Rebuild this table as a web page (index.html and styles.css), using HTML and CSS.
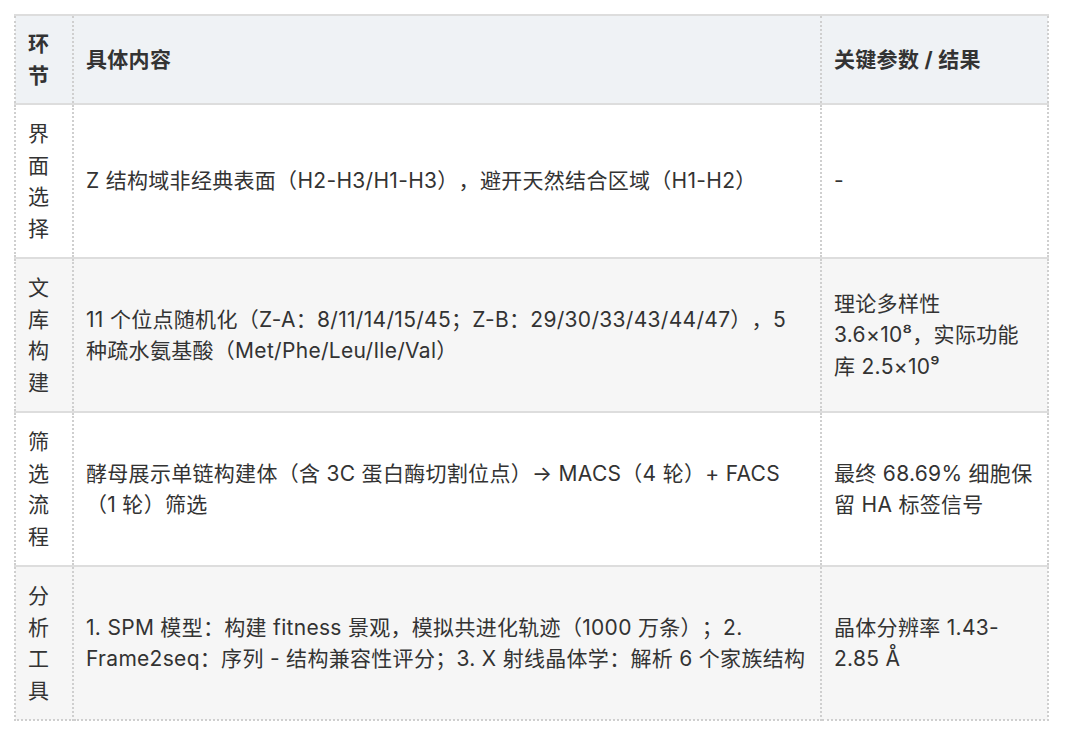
FILE: index.html
```html
<!DOCTYPE html>
<html lang="zh-CN">
<head>
<meta charset="utf-8">
<title>表格</title>
<link rel="stylesheet" href="styles.css">
</head>
<body>
<table class="data">
  <colgroup>
    <col class="c1">
    <col class="c2">
    <col class="c3">
  </colgroup>
  <thead>
    <tr>
      <th>环节</th>
      <th>具体内容</th>
      <th>关键参数 / 结果</th>
    </tr>
  </thead>
  <tbody>
    <tr>
      <td>界面选择</td>
      <td>Z 结构域非经典表面（H2-H3/H1-H3），避开天然结合区域（H1-H2）</td>
      <td>-</td>
    </tr>
    <tr>
      <td>文库构建</td>
      <td>11 个位点随机化（Z-A：8/11/14/15/45；Z-B：29/30/33/43/44/47），5 种疏水氨基酸（Met/Phe/Leu/Ile/Val）</td>
      <td>理论多样性 3.6×10⁸，实际功能库 2.5×10⁹</td>
    </tr>
    <tr>
      <td>筛选流程</td>
      <td>酵母展示单链构建体（含 3C 蛋白酶切割位点）→ MACS（4 轮）+ FACS（1 轮）筛选</td>
      <td>最终 68.69% 细胞保留 HA 标签信号</td>
    </tr>
    <tr>
      <td>分析工具</td>
      <td>1. SPM 模型：构建 fitness 景观，模拟共进化轨迹（1000 万条）；2. Frame2seq：序列 - 结构兼容性评分；3. X 射线晶体学：解析 6 个家族结构</td>
      <td>晶体分辨率 1.43-2.85 Å</td>
    </tr>
  </tbody>
</table>
</body>
</html>
```

FILE: styles.css
```css
html, body {
  margin: 0;
  padding: 0;
  background: #ffffff;
}

body {
  padding: 14px 0 0 14px;
  font-family: "Inter", "Noto Sans CJK SC", sans-serif;
  font-size: 21px;
  line-height: 31.5px;
  color: #333333;
  letter-spacing: 0.3px;
  text-spacing-trim: space-all;
}

.data {
  border-collapse: collapse;
  table-layout: fixed;
  width: 1033px;
}

.data .c1 { width: 58px; }
.data .c2 { width: 748px; }
.data .c3 { width: 227px; }

.data th,
.data td {
  border: 2px dotted #cfcfcf;
  padding: 13px 12px;
  text-align: left;
  vertical-align: middle;
}

.data th {
  padding: 12px 12px 12px;
}

.data tr {
  border-top: 2px solid #dddddd;
}

.data th {
  background: #eff2f5;
  font-weight: 700;
  color: #333333;
}

.data tbody tr:nth-child(even) td {
  background: #f6f6f6;
}
```
